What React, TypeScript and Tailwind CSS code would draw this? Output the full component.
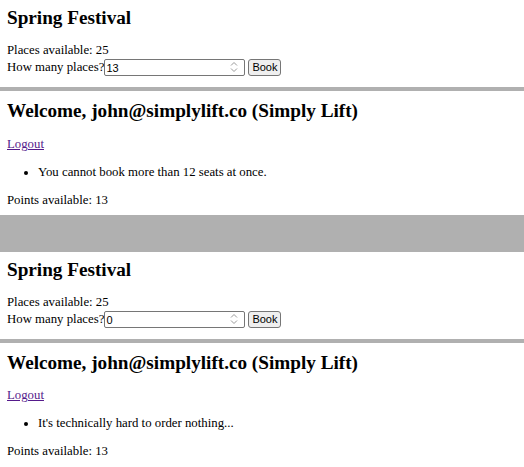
import React from 'react';

const serif = "font-['Liberation_Serif','Times_New_Roman',serif]";

const Spinner = () => (
  <svg width="8" height="12" viewBox="0 0 8 12" className="absolute right-[7px] top-[2px]" fill="none" stroke="#9a9a9a" strokeWidth="1">
    <path d="M1 4.5 4 1.5 7 4.5" />
    <path d="M1 7.5 4 10.5 7 7.5" />
  </svg>
);

const Booking = ({ value }: { value: string }) => (
  <div className="px-[7px]">
    <h2 className="mt-[7px] text-[19.2px] font-bold leading-[22px]">Spring Festival</h2>
    <p className="mt-[13px] leading-[17px]">Places available: 25</p>
    <div className="flex h-[17px] items-center">
      <span className="leading-[17px]">How many places?</span>
      <div className="relative">
        <input
          type="number"
          defaultValue={value}
          className="block h-[17px] w-[141px] rounded-[2px] border border-[#767676] bg-white px-[1px] font-['Liberation_Sans',Arial,sans-serif] text-[11px] text-black [appearance:textfield]"
        />
        <Spinner />
      </div>
      <button className="ml-[3px] h-[17px] rounded-[3px] border border-[#767676] bg-[#efefef] px-[3px] font-['Liberation_Sans',Arial,sans-serif] text-[11px] leading-[13px] text-black">
        Book
      </button>
    </div>
  </div>
);

const Welcome = ({ message, first }: { message: string; first?: boolean }) => (
  <div className="px-[7px]">
    <h2 className="mt-[9px] text-[19.2px] font-bold leading-[22px]">Welcome, john@simplylift.co (Simply Lift)</h2>
    <a href="#" className={`${first ? 'mt-[14px]' : 'mt-[13px]'} block w-fit leading-[17px] text-[#551a8b] underline`}>
      Logout
    </a>
    <ul className="mt-[11px] list-disc pl-[31px] leading-[17px]">
      <li>{message}</li>
    </ul>
    <p className="mt-[11px] leading-[17px]">Points available: 13</p>
  </div>
);

export default function App() {
  return (
    <div className={`${serif} min-h-[467px] bg-white text-[12.8px] text-black`}>
      <Booking value="13" />
      <div className="mt-[11px] h-[4px] bg-[#b0b0b0]" />
      <Welcome message="You cannot book more than 12 seats at once." first />
      <div className="mt-[6px] h-[37px] bg-[#b0b0b0]" />
      <Booking value="0" />
      <div className="mt-[11px] h-[4px] bg-[#b0b0b0]" />
      <Welcome message="It's technically hard to order nothing..." />
    </div>
  );
}
